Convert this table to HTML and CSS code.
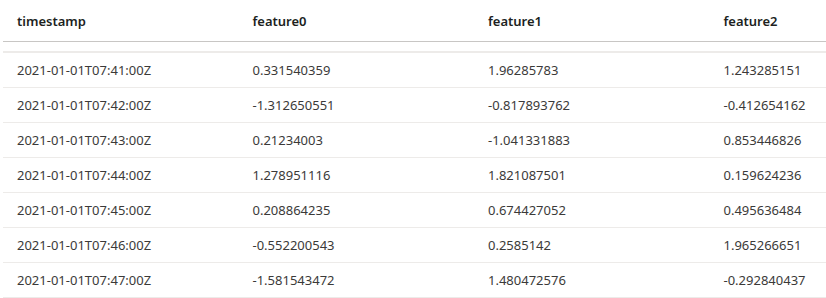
FILE: index.html
```html
<!DOCTYPE html>
<html>
<head>
<meta charset="utf-8">
<link rel="stylesheet" href="styles.css">
</head>
<body>
<table class="grid">
  <colgroup><col class="c"><col class="c"><col class="c"><col class="c"></colgroup>
  <thead>
    <tr><th>timestamp</th><th>feature0</th><th>feature1</th><th>feature2</th></tr>
  </thead>
  <tbody>
    <tr class="spacer"><td colspan="4"></td></tr>
    <tr><td>2021-01-01T07:41:00Z</td><td>0.331540359</td><td>1.96285783</td><td>1.243285151</td></tr>
    <tr><td>2021-01-01T07:42:00Z</td><td>-1.312650551</td><td>-0.817893762</td><td>-0.412654162</td></tr>
    <tr><td>2021-01-01T07:43:00Z</td><td>0.21234003</td><td>-1.041331883</td><td>0.853446826</td></tr>
    <tr><td>2021-01-01T07:44:00Z</td><td>1.278951116</td><td>1.821087501</td><td>0.159624236</td></tr>
    <tr><td>2021-01-01T07:45:00Z</td><td>0.208864235</td><td>0.674427052</td><td>0.495636484</td></tr>
    <tr><td>2021-01-01T07:46:00Z</td><td>-0.552200543</td><td>0.2585142</td><td>1.965266651</td></tr>
    <tr><td>2021-01-01T07:47:00Z</td><td>-1.581543472</td><td>1.480472576</td><td>-0.292840437</td></tr>
  </tbody>
</table>
</body>
</html>
```
FILE: styles.css
```css
html, body {
  margin: 0;
  padding: 0;
  background: #fff;
  overflow: hidden;
}
body {
  padding-left: 3px;
  font-family: "Noto Sans", "Open Sans", sans-serif;
  font-size: 13px;
  color: #3b3a39;
}
.grid {
  border-collapse: separate;
  border-spacing: 0;
  table-layout: fixed;
  width: 942px;
}
.grid .c {
  width: 235.5px;
}
.grid th {
  height: 42px;
  padding: 0 0 0 14px;
  text-align: left;
  font-weight: 600;
  color: #201f1e;
  vertical-align: middle;
  border-bottom: 1px solid #c8c6c4;
  box-sizing: border-box;
  white-space: nowrap;
}
.grid td {
  height: 35px;
  padding: 0 0 0 14px;
  border-bottom: 1px solid #edebe9;
  box-sizing: border-box;
  vertical-align: middle;
  white-space: nowrap;
}
.grid tr.spacer td {
  height: 11px;
  padding: 0;
  border-bottom: 2px solid #edebe9;
}
```
